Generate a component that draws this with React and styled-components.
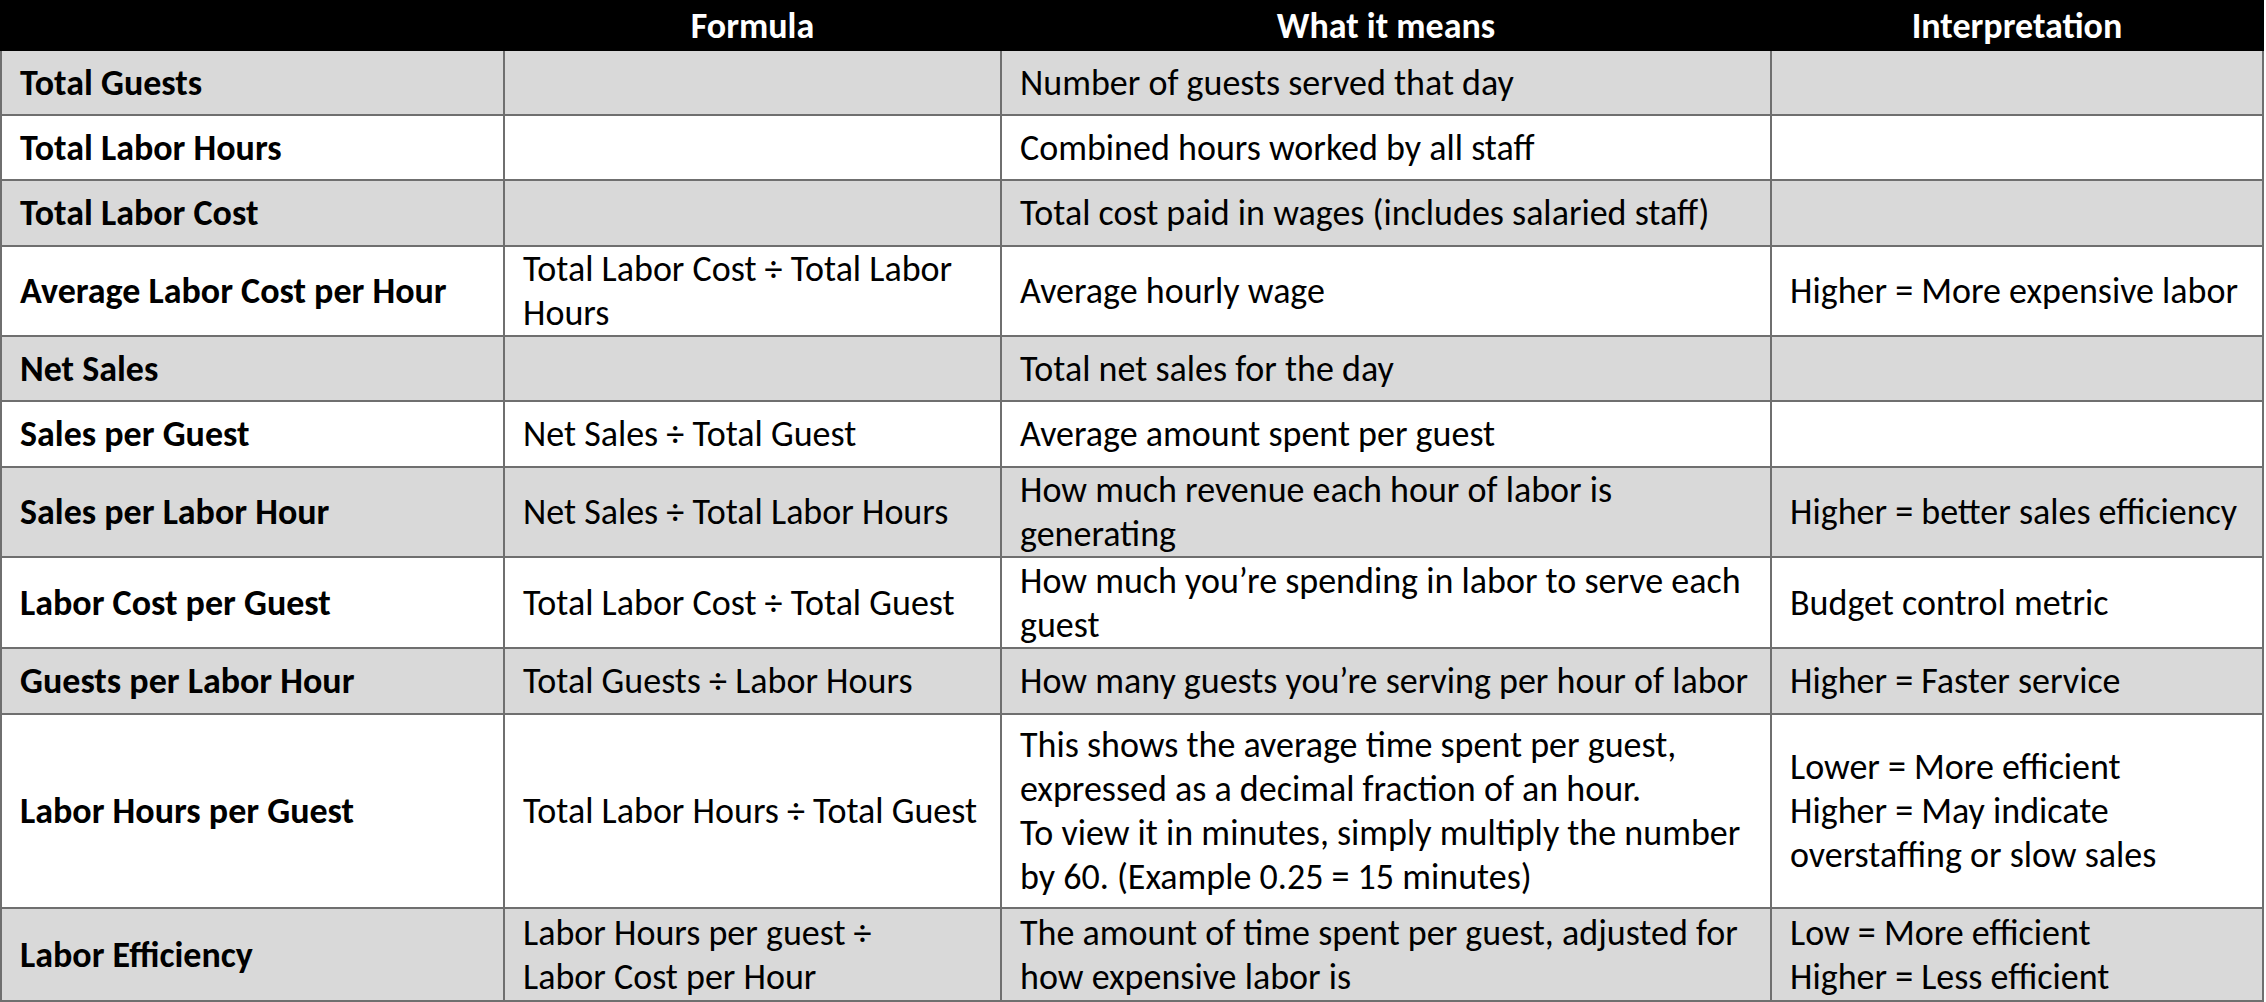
import styled, { createGlobalStyle } from "styled-components";

const GlobalStyle = createGlobalStyle`
    * { box-sizing: border-box; }
    body {
        margin: 0;
        background: #fff;
        font-family: Carlito, Lato, "Liberation Sans", sans-serif;
    }
`;

const COLUMNS = "501px 495px 768px 490px";

const Sheet = styled.div`
    width: 2264px;
    display: flex;
    flex-direction: column;
`;

const HeaderRow = styled.div`
    display: grid;
    grid-template-columns: ${COLUMNS};
    column-gap: 2px;
    padding: 0 2px;
    height: 51px;
    background: #000;
`;

const HeaderCell = styled.div`
    display: flex;
    align-items: center;
    justify-content: center;
    color: #fff;
    font-weight: 700;
    font-size: 36px;
`;

const Body = styled.div`
    display: flex;
    flex-direction: column;
    row-gap: 2px;
    padding: 0 2px 2px 2px;
    background: #6f6f6f;
`;

const Row = styled.div`
    display: grid;
    grid-template-columns: ${COLUMNS};
    column-gap: 2px;
    height: ${({ h }) => h}px;
`;

const Cell = styled.div`
    display: flex;
    flex-direction: column;
    justify-content: center;
    padding: 0 8px 0 18px;
    background: ${({ shade }) => (shade ? "#d9d9d9" : "#fff")};
    color: #000;
    font-size: 36px;
    line-height: 44px;
    font-weight: ${({ bold }) => (bold ? 700 : 400)};
    white-space: nowrap;
`;

const rows = [
    { h: 63, name: "Total Guests", formula: [], means: ["Number of guests served that day"], interp: [] },
    { h: 63, name: "Total Labor Hours", formula: [], means: ["Combined hours worked by all staff"], interp: [] },
    { h: 64, name: "Total Labor Cost", formula: [], means: ["Total cost paid in wages (includes salaried staff)"], interp: [] },
    {
        h: 88,
        name: "Average Labor Cost per Hour",
        formula: ["Total Labor Cost ÷ Total Labor", "Hours"],
        means: ["Average hourly wage"],
        interp: ["Higher = More expensive labor"],
    },
    { h: 63, name: "Net Sales", formula: [], means: ["Total net sales for the day"], interp: [] },
    { h: 64, name: "Sales per Guest", formula: ["Net Sales ÷ Total Guest"], means: ["Average amount spent per guest"], interp: [] },
    {
        h: 88,
        name: "Sales per Labor Hour",
        formula: ["Net Sales ÷ Total Labor Hours"],
        means: ["How much revenue each hour of labor is", "generating"],
        interp: ["Higher = better sales efficiency"],
    },
    {
        h: 89,
        name: "Labor Cost per Guest",
        formula: ["Total Labor Cost ÷ Total Guest"],
        means: ["How much you’re spending in labor to serve each", "guest"],
        interp: ["Budget control metric"],
    },
    {
        h: 64,
        name: "Guests per Labor Hour",
        formula: ["Total Guests ÷ Labor Hours"],
        means: ["How many guests you’re serving per hour of labor"],
        interp: ["Higher = Faster service"],
    },
    {
        h: 192,
        name: "Labor Hours per Guest",
        formula: ["Total Labor Hours ÷ Total Guest"],
        means: [
            "This shows the average time spent per guest,",
            "expressed as a decimal fraction of an hour.",
            "To view it in minutes, simply multiply the number",
            "by 60. (Example 0.25 = 15 minutes)",
        ],
        interp: ["Lower = More efficient", "Higher = May indicate", "overstaffing or slow sales"],
    },
    {
        h: 91,
        name: "Labor Efficiency",
        formula: ["Labor Hours per guest ÷", "Labor Cost per Hour"],
        means: ["The amount of time spent per guest, adjusted for", "how expensive labor is"],
        interp: ["Low = More efficient", "Higher = Less efficient"],
    },
];

const Lines = ({ lines }) => lines.map((line, i) => <span key={i}>{line}</span>);

function App() {
    return (
        <>
            <GlobalStyle />
            <Sheet>
                <HeaderRow>
                    <HeaderCell />
                    <HeaderCell>Formula</HeaderCell>
                    <HeaderCell>What it means</HeaderCell>
                    <HeaderCell>Interpretation</HeaderCell>
                </HeaderRow>
                <Body>
                    {rows.map((row, i) => {
                        const shade = i % 2 === 0;
                        return (
                            <Row key={row.name} h={row.h}>
                                <Cell shade={shade} bold>{row.name}</Cell>
                                <Cell shade={shade}><Lines lines={row.formula} /></Cell>
                                <Cell shade={shade}><Lines lines={row.means} /></Cell>
                                <Cell shade={shade}><Lines lines={row.interp} /></Cell>
                            </Row>
                        );
                    })}
                </Body>
            </Sheet>
        </>
    );
}

export default App;
